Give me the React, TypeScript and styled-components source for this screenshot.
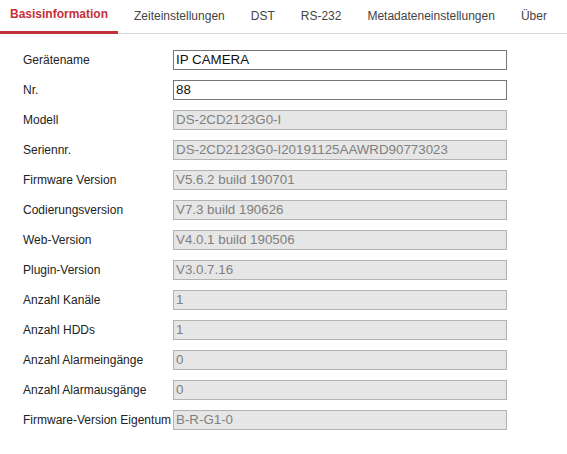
import React from "react";
import styled, { createGlobalStyle } from "styled-components";

const Global = createGlobalStyle`
  html, body { margin: 0; padding: 0; background: #fff; }
  body { font-family: "Liberation Sans", Arial, sans-serif; }
  * { box-sizing: border-box; }
`;

const Page = styled.div`
  width: 567px;
  height: 454px;
  background: #fff;
  overflow: hidden;
`;

const TabBar = styled.div`
  display: flex;
  height: 34px;
  border-bottom: 1px solid #d9d9d9;
`;

const Tab = styled.div<{ $active?: boolean }>`
  height: 34px;
  margin-right: 6px;
  margin-bottom: -1px;
  padding: 0 10px;
  font-size: 12px;
  white-space: nowrap;
  line-height: ${(p) => (p.$active ? "28px" : "32px")};
  font-weight: ${(p) => (p.$active ? "bold" : "normal")};
  color: ${(p) => (p.$active ? "#c4303a" : "#444")};
  border-bottom: 3px solid ${(p) => (p.$active ? "#c4303a" : "transparent")};
`;

const Form = styled.div`
  padding: 11px 0 0 23px;
  display: flex;
  flex-direction: column;
`;

const Row = styled.div`
  display: grid;
  grid-template-columns: 150px 334px;
  align-items: center;
  height: 30px;
`;

const Label = styled.div`
  font-size: 12px;
  color: #222;
  white-space: nowrap;
`;

const Field = styled.div<{ $disabled?: boolean }>`
  height: 20px;
  padding-left: 2px;
  font-size: 13.33px;
  line-height: 18px;
  white-space: nowrap;
  overflow: hidden;
  border: 1px solid ${(p) => (p.$disabled ? "#b3b3b3" : "#757575")};
  background: ${(p) => (p.$disabled ? "#e6e6e6" : "#fff")};
  color: ${(p) => (p.$disabled ? "#808080" : "#111")};
`;

const tabs = [
  "Basisinformation",
  "Zeiteinstellungen",
  "DST",
  "RS-232",
  "Metadateneinstellungen",
  "Über",
];

const rows: [string, string, boolean][] = [
  ["Gerätename", "IP CAMERA", false],
  ["Nr.", "88", false],
  ["Modell", "DS-2CD2123G0-I", true],
  ["Seriennr.", "DS-2CD2123G0-I20191125AAWRD90773023", true],
  ["Firmware Version", "V5.6.2 build 190701", true],
  ["Codierungsversion", "V7.3 build 190626", true],
  ["Web-Version", "V4.0.1 build 190506", true],
  ["Plugin-Version", "V3.0.7.16", true],
  ["Anzahl Kanäle", "1", true],
  ["Anzahl HDDs", "1", true],
  ["Anzahl Alarmeingänge", "0", true],
  ["Anzahl Alarmausgänge", "0", true],
  ["Firmware-Version Eigentum", "B-R-G1-0", true],
];

export default function App() {
  return (
    <Page>
      <Global />
      <TabBar>
        {tabs.map((t, i) => (
          <Tab key={t} $active={i === 0}>
            {t}
          </Tab>
        ))}
      </TabBar>
      <Form>
        {rows.map(([l, v, d]) => (
          <Row key={l}>
            <Label>{l}</Label>
            <Field $disabled={d}>{v}</Field>
          </Row>
        ))}
      </Form>
    </Page>
  );
}
